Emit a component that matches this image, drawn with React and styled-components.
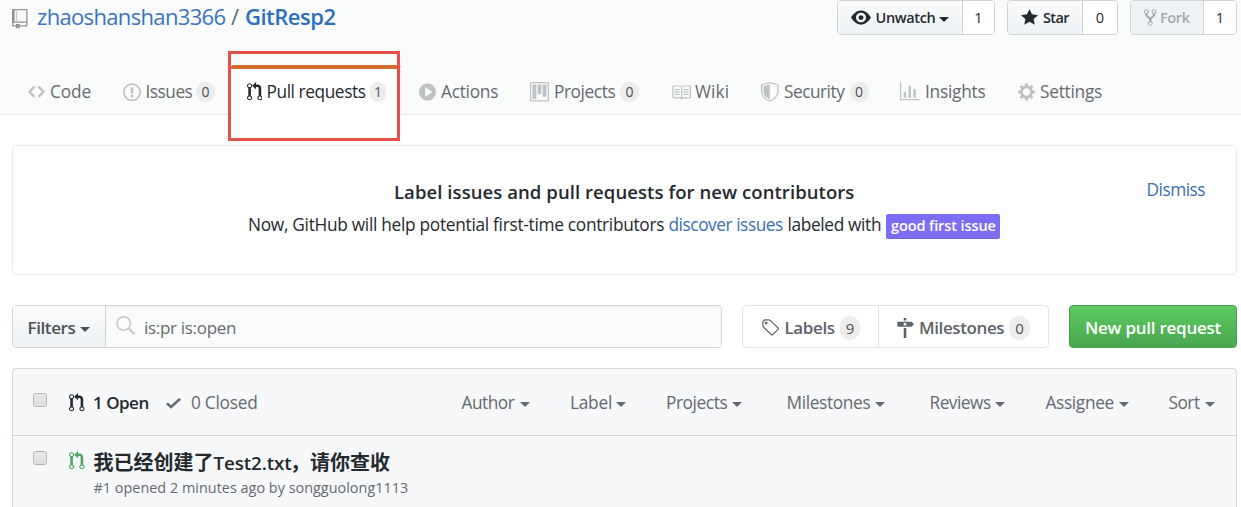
import React from 'react';
import styled, { createGlobalStyle, css } from 'styled-components';

const GlobalStyle = createGlobalStyle`
  *, *::before, *::after { box-sizing: border-box; }
  body {
    margin: 0;
    overflow: hidden;
    background: #fff;
    color: #24292e;
    font-family: "Open Sans", "Noto Sans CJK SC", sans-serif;
  }
`;

/* ---------- icons ---------- */

const PATHS = {
  code: [14, 16, 'M9.5 3L8 4.5 11.5 8 8 11.5 9.5 13 14 8 9.5 3zm-5 0L0 8l4.5 5L6 11.5 2.5 8 6 4.5 4.5 3z'],
  issue: [14, 16, 'M7 2.3c3.14 0 5.7 2.56 5.7 5.7s-2.56 5.7-5.7 5.7A5.71 5.71 0 0 1 1.3 8c0-3.14 2.56-5.7 5.7-5.7zM7 1C3.14 1 0 4.14 0 8s3.14 7 7 7 7-3.14 7-7-3.14-7-7-7zm1 3H6v5h2V4zm0 6H6v2h2v-2z'],
  pull: [12, 16, 'M11 11.28V5c-.03-.78-.34-1.47-.94-2.06C9.46 2.35 8.78 2.03 8 2H7V0L4 3l3 3V4h1c.27.02.48.11.69.31.21.2.3.42.31.69v6.28A1.993 1.993 0 0 0 10 15a1.993 1.993 0 0 0 1-3.72zm-1 2.92c-.66 0-1.2-.55-1.2-1.2 0-.65.55-1.2 1.2-1.2.65 0 1.2.55 1.2 1.2 0 .65-.55 1.2-1.2 1.2zM4 3c0-1.11-.89-2-2-2a1.993 1.993 0 0 0-1 3.72v6.56A1.993 1.993 0 0 0 2 15a1.993 1.993 0 0 0 1-3.72V4.72c.59-.34 1-.98 1-1.72zm-.8 10c0 .66-.55 1.2-1.2 1.2-.65 0-1.2-.55-1.2-1.2 0-.65.55-1.2 1.2-1.2.65 0 1.2.55 1.2 1.2zM2 4.2C1.34 4.2.8 3.65.8 3c0-.65.55-1.2 1.2-1.2.65 0 1.2.55 1.2 1.2 0 .65-.55 1.2-1.2 1.2z'],
  play: [14, 16, 'M14 8A7 7 0 1 1 0 8a7 7 0 0 1 14 0zm-8.223 3.482l4.599-3.066a.5.5 0 0 0 0-.832L5.777 4.518A.5.5 0 0 0 5 4.934v6.132a.5.5 0 0 0 .777.416z'],
  project: [15, 16, 'M10 12h3V2h-3v10zm-4-2h3V2H6v8zm-4 4h3V2H2v12zm-1 1h13V1H1v14zM14 0H1a1 1 0 0 0-1 1v14a1 1 0 0 0 1 1h13a1 1 0 0 0 1-1V1a1 1 0 0 0-1-1z'],
  book: [16, 16, 'M3 5h4v1H3V5zm0 3h4V7H3v1zm0 2h4V9H3v1zm11-5h-4v1h4V5zm0 2h-4v1h4V7zm0 2h-4v1h4V9zm2-6v9c0 .55-.45 1-1 1H9.5l-1 1-1-1H2c-.55 0-1-.45-1-1V3c0-.55.45-1 1-1h5.5l1 1 1-1H15c.55 0 1 .45 1 1zm-8 .5L7.5 3H2v9h6V3.5zm7-.5H9.5l-.5.5V12h6V3z'],
  shield: [14, 16, 'M0 2l7-2 7 2v6.02C14 12.69 8.69 16 7 16c-1.69 0-7-3.31-7-7.98V2zm1 .75L7 1l6 1.75v5.268C13 12.104 8.449 15 7 15c-1.449 0-6-2.896-6-6.982V2.75zm1 .75L7 2v12c-1.207 0-5-2.482-5-5.985V3.5z'],
  graph: [16, 16, 'M16 14v1H0V0h1v14h15zM5 13H3V8h2v5zm4 0H7V3h2v10zm4 0h-2V6h2v7z'],
  gear: [14, 16, 'M14 8.77v-1.6l-1.94-.64-.45-1.09.88-1.84-1.13-1.13-1.81.91-1.09-.45-.69-1.92h-1.6l-.63 1.94-1.11.45-1.84-.88-1.13 1.13.91 1.81-.45 1.09L0 7.23v1.59l1.94.64.45 1.09-.88 1.84 1.13 1.13 1.81-.91 1.09.45.69 1.92h1.59l.63-1.94 1.11-.45 1.84.88 1.13-1.13-.92-1.81.47-1.09L14 8.75v.02zM7 11c-1.66 0-3-1.34-3-3s1.34-3 3-3 3 1.34 3 3-1.34 3-3 3z'],
  repo: [12, 16, 'M4 9H3V8h1v1zm0-3H3v1h1V6zm0-2H3v1h1V4zm0-2H3v1h1V2zm8-1v12c0 .55-.45 1-1 1H6v2l-1.5-1.5L3 16v-2H1c-.55 0-1-.45-1-1V1c0-.55.45-1 1-1h10c.55 0 1 .45 1 1zm-1 10H1v2h2v-1h3v1h5v-2zm0-10H2v9h9V1z'],
  eye: [16, 16, 'M8.06 2C3 2 0 8 0 8s3 6 8.06 6C13 14 16 8 16 8s-3-6-7.94-6zM8 12c-2.2 0-4-1.78-4-4 0-2.2 1.8-4 4-4 2.22 0 4 1.8 4 4 0 2.22-1.78 4-4 4zm2-4c0 1.11-.89 2-2 2-1.11 0-2-.89-2-2 0-1.11.89-2 2-2 1.11 0 2 .89 2 2z'],
  star: [14, 16, 'M14 6l-4.9-.64L7 1 4.9 5.36 0 6l3.6 3.26L2.67 14 7 11.67 11.33 14l-.93-4.74L14 6z'],
  fork: [10, 16, 'M8 1a1.993 1.993 0 0 0-1 3.72V6L5 8 3 6V4.72A1.993 1.993 0 0 0 2 1a1.993 1.993 0 0 0-1 3.72V6.5l3 3v1.78A1.993 1.993 0 0 0 5 15a1.993 1.993 0 0 0 1-3.72V9.5l3-3V4.72A1.993 1.993 0 0 0 8 1zM2 4.2C1.34 4.2.8 3.65.8 3c0-.65.55-1.2 1.2-1.2.65 0 1.2.55 1.2 1.2 0 .65-.55 1.2-1.2 1.2zm3 10c-.66 0-1.2-.55-1.2-1.2 0-.65.55-1.2 1.2-1.2.65 0 1.2.55 1.2 1.2 0 .65-.55 1.2-1.2 1.2zm3-10c-.66 0-1.2-.55-1.2-1.2 0-.65.55-1.2 1.2-1.2.65 0 1.2.55 1.2 1.2 0 .65-.55 1.2-1.2 1.2z'],
  search: [16, 16, 'M15.7 13.3l-3.81-3.83A5.93 5.93 0 0 0 13 6c0-3.31-2.69-6-6-6S1 2.69 1 6s2.69 6 6 6c1.3 0 2.48-.41 3.47-1.11l3.83 3.81c.19.2.45.3.7.3.25 0 .52-.09.7-.3a.996.996 0 0 0 0-1.41v.01zM7 10.7c-2.59 0-4.7-2.11-4.7-4.7 0-2.59 2.11-4.7 4.7-4.7 2.59 0 4.7 2.11 4.7 4.7 0 2.59-2.11 4.7-4.7 4.7z'],
  tag: [14, 16, 'M7.73 1.73C7.26 1.26 6.62 1 5.96 1H3.5C2.13 1 1 2.13 1 3.5v2.47c0 .66.27 1.3.73 1.77l6.06 6.06c.39.39 1.02.39 1.41 0l4.59-4.59a.996.996 0 0 0 0-1.41L7.73 1.73zM2.38 7.09c-.31-.3-.47-.7-.47-1.13V3.5c0-.88.72-1.59 1.59-1.59h2.47c.42 0 .83.16 1.13.47l6.14 6.13-4.73 4.73-6.13-6.15zM3.01 3h2v2H3V3h.01z'],
  milestone: [14, 16, 'M8 2H6V0h2v2zm4 5H2c-.55 0-1-.45-1-1V4c0-.55.45-1 1-1h10l2 2-2 2zM8 4H6v2h2V4zM6 16h2V8H6v8z'],
  check: [12, 16, 'M12 5l-8 8-4-4 1.5-1.5L4 10l6.5-6.5L12 5z'],
};

const IconSvg = styled.svg`
  display: block;
  flex: none;
  fill: currentColor;
  color: ${p => p.$color || 'inherit'};
  margin-top: ${p => p.$drop || 0}px;
`;

function Icon({ name, w, h, color, drop }) {
  const [vw, vh, d] = PATHS[name];
  return (
    <IconSvg width={w} height={h} viewBox={`0 0 ${vw} ${vh}`} preserveAspectRatio="none" $color={color} $drop={drop}>
      <path fillRule="evenodd" d={d} />
    </IconSvg>
  );
}

/* ---------- shared parts ---------- */

const Text = styled.span`
  flex: none;
  white-space: pre;
  font-size: ${p => p.$size || 17.3}px;
  font-weight: ${p => (p.$bold ? 600 : 400)};
  letter-spacing: ${p => p.$track || 0}px;
  ${p => p.$w && css`width: ${p.$w}px;`}
`;

const IconSlot = styled.span`
  display: flex;
  align-items: center;
  flex: none;
  width: ${p => p.$w}px;
`;

const Caret = styled.span`
  flex: none;
  margin-top: 3px;
  border: 5px solid transparent;
  border-top-color: currentColor;
  border-bottom-width: 0;
`;

const Counter = styled.span`
  display: flex;
  align-items: center;
  justify-content: center;
  flex: none;
  width: ${p => p.$w || 19}px;
  height: ${p => p.$h || 20}px;
  border-radius: 10px;
  background: #ededee;
  color: #4b5056;
  font-size: ${p => p.$size || 14}px;
  font-weight: 500;
  line-height: 20px;
`;

/* ---------- repository header ---------- */

const Header = styled.header`
  display: flex;
  flex-direction: column;
  height: 115px;
  background: #fafbfb;
  border-bottom: 1px solid #e4e6e8;
`;

const TitleBar = styled.div`
  display: flex;
  align-items: flex-start;
  justify-content: space-between;
  flex: none;
  height: 65px;
  padding: 0 4px 0 12px;
`;

const RepoTitle = styled.h1`
  display: flex;
  align-items: center;
  height: 31px;
  margin: 0;
  line-height: 32px;
  color: #3a74c2;
`;

const Slash = styled(Text)`
  color: #666b70;
`;

const RepoName = styled(Text)`
  color: #2b6fbd;
`;

const Actions = styled.div`
  display: flex;
  gap: 12px;
`;

const ButtonGroup = styled.div`
  display: flex;
  height: 35px;
  border: 1px solid #cfd2d5;
  border-radius: 4px;
  overflow: hidden;
  line-height: 33px;
`;

const ActionButton = styled.div`
  display: flex;
  align-items: center;
  width: ${p => p.$w}px;
  padding-left: 13px;
  border-right: 1px solid #cfd2d5;
  background: ${p => (p.$disabled ? '#eff3f6' : 'linear-gradient(#fafbfc, #eff3f6)')};
  color: ${p => (p.$disabled ? '#a5aaaf' : '#24292e')};
`;

const SocialCount = styled.div`
  width: ${p => p.$w}px;
  background: #fff;
  text-align: center;
  font-size: 14.5px;
  font-weight: 500;
`;

const Tabs = styled.nav`
  display: flex;
  flex: none;
  height: 49px;
  padding-left: 28px;
  line-height: 24px;
`;

const Tab = styled.div`
  display: flex;
  align-items: center;
  flex: none;
  width: ${p => p.$w}px;
  height: 50px;
  padding-top: 4px;
  color: #666a70;
  ${p => p.$selected && css`
    margin: 0 18px 0 0;
    padding: 0 0 0 15.5px;
    background: #fff;
    border-right: 1px solid #eceeef;
    border-top: 4px solid #d26b2c;
    border-radius: 2px 2px 0 0;
    color: #24292e;
  `}
`;

const Highlight = styled.div`
  position: absolute;
  left: 228px;
  top: 51px;
  width: 172px;
  height: 90px;
  border: 3px solid #e5504c;
`;

/* ---------- notice ---------- */

const Main = styled.main`
  display: flex;
  flex-direction: column;
  padding: 30px 4px 0 12px;
`;

const Notice = styled.section`
  display: flex;
  justify-content: space-between;
  height: 130px;
  padding: 32px 31px 0 235px;
  border: 1px solid #e9eaeb;
  border-radius: 4px;
`;

const NoticeBody = styled.div`
  display: flex;
  flex-direction: column;
`;

const NoticeTitle = styled.div`
  height: 31px;
  padding-left: 146px;
  line-height: 28px;
`;

const NoticeText = styled.div`
  display: flex;
  align-items: center;
  height: 32px;
  line-height: 30px;
`;

const Link = styled(Text)`
  color: #3a6fae;
`;

const Dismiss = styled(Link)`
  line-height: 24px;
`;

const IssueLabel = styled.span`
  display: flex;
  align-items: center;
  width: 114px;
  height: 25px;
  margin-top: 2px;
  padding-left: 5px;
  border-radius: 2px;
  background: #7d6df5;
  box-shadow: inset 0 -1px 0 rgba(27, 31, 35, 0.12);
  color: #fff;
  line-height: 24px;
`;

/* ---------- toolbar ---------- */

const Toolbar = styled.div`
  display: flex;
  height: 43px;
  margin-top: 30px;
  gap: 20px;
  line-height: 41px;
`;

const SearchGroup = styled.div`
  display: flex;
  width: 710px;
  border: 1px solid #d3d6d9;
  border-radius: 4px;
  overflow: hidden;
`;

const FilterButton = styled.div`
  display: flex;
  align-items: center;
  width: 93px;
  padding: 2px 0 0 14.5px;
  border-right: 1px solid #d3d6d9;
  background: linear-gradient(#fafbfc, #eff3f6);
  color: #4b5157;
`;

const SearchInput = styled.div`
  display: flex;
  align-items: center;
  flex: 1;
  padding: 2px 0 0 9px;
  background: #fafbfb;
  box-shadow: inset 0 1px 2px rgba(27, 31, 35, 0.07);
  color: #666a70;
`;

const SubNav = styled.div`
  display: flex;
  width: 307px;
  border: 1px solid #e3e5e7;
  border-radius: 4px;
`;

const SubNavItem = styled.div`
  display: flex;
  align-items: center;
  width: ${p => p.$w}px;
  padding: 2px 0 0 ${p => p.$inset}px;
  color: #5d6369;
  & + & { border-left: 1px solid #e3e5e7; }
`;

const PrimaryButton = styled.div`
  width: 168px;
  padding: 1px 0 0 15px;
  border: 1px solid #47a04f;
  border-radius: 4px;
  background: linear-gradient(#5fcb62, #47a64d);
  color: #fff;
`;

/* ---------- pull request list ---------- */

const List = styled.section`
  height: 160px;
  margin-top: 20px;
  border: 1px solid #d6d9dc;
  border-radius: 4px;
  background: #f6f8fa;
`;

const ListHeader = styled.div`
  display: flex;
  align-items: center;
  height: 67px;
  padding: 2px 0 0 20px;
  border-bottom: 1px solid #d3d6da;
  line-height: 28px;
  color: #666a70;
`;

const Checkbox = styled.span`
  flex: none;
  width: 14px;
  height: 14px;
  margin: ${p => p.$shift}px 22px 0 0;
  border: 1px solid #b3b5b7;
  border-radius: 3px;
  background: linear-gradient(#e9e9ea, #dcdddf);
`;

const OpenState = styled(Text)`
  color: #24292e;
`;

const FilterMenu = styled.div`
  display: flex;
  align-items: center;
  flex: none;
  width: ${p => p.$w}px;
`;

const Row = styled.div`
  display: flex;
  padding: 11px 0 0 20px;
`;

const RowBody = styled.div`
  display: flex;
  flex-direction: column;
`;

const RowTitle = styled.div`
  display: flex;
  align-items: baseline;
  height: 30px;
  line-height: 30px;
`;

const RowTitleCjk = styled(Text)`
  font-family: "Noto Sans CJK SC", sans-serif;
  font-size: 20px;
  font-weight: 700;
  line-height: 30px;
`;

const RowMeta = styled.div`
  height: 20px;
  line-height: 20px;
  color: #666a70;
`;

const TABS = [
  { icon: 'code', iw: 17, ih: 19.5, slot: 22, label: 'Code', track: -0.1, width: 95 },
  { icon: 'issue', iw: 18, ih: 20.5, slot: 22.5, label: 'Issues', track: -0.5, tw: 50.5, count: 0, width: 108 },
  { icon: 'pull', iw: 15.5, ih: 19.5, slot: 20, label: 'Pull requests', track: -0.42, tw: 103.5, count: 1, cw: 16, width: 170, selected: true },
  { icon: 'play', iw: 17, ih: 20, slot: 22, label: 'Actions', track: -0.25, width: 111 },
  { icon: 'project', iw: 19, ih: 19.5, slot: 24, label: 'Projects', track: -0.42, tw: 66, count: 0, width: 141 },
  { icon: 'book', iw: 20, ih: 19, slot: 24, label: 'Wiki', track: 0.1, width: 90 },
  { icon: 'shield', iw: 17.5, ih: 19.5, slot: 23, label: 'Security', track: -0.5, tw: 65.5, count: 0, width: 139 },
  { icon: 'graph', iw: 19.5, ih: 19.5, slot: 25, label: 'Insights', track: -0.25, width: 118 },
  { icon: 'gear', iw: 17, ih: 20, slot: 22, label: 'Settings', track: -0.25, width: 100 },
];

const MENUS = [
  { label: 'Author', track: -0.5, tw: 58, width: 108.5 },
  { label: 'Label', track: -0.25, tw: 46, width: 96 },
  { label: 'Projects', track: -0.42, tw: 66, width: 120.5 },
  { label: 'Milestones', track: -0.35, tw: 88, width: 143 },
  { label: 'Reviews', track: -0.5, tw: 65, width: 116 },
  { label: 'Assignee', track: -0.35, tw: 73, width: 123 },
  { label: 'Sort', track: -0.5, tw: 36, width: 50 },
];

export default function App() {
  return (
    <>
      <GlobalStyle />
      <Header>
        <TitleBar>
          <RepoTitle>
            <IconSlot $w={25}><Icon name="repo" w={15.5} h={20} drop={6} color="#8f9498" /></IconSlot>
            <Text $size={22} $track={-0.66} $w={194}>zhaoshanshan3366</Text>
            <Slash $size={22} $w={14}>/</Slash>
            <RepoName $size={22} $track={-0.5} $bold>GitResp2</RepoName>
          </RepoTitle>
          <Actions>
            <ButtonGroup>
              <ActionButton $w={125}>
                <IconSlot $w={24.5}><Icon name="eye" w={20} h={19} /></IconSlot>
                <Text $size={14.5} $track={-0.35} $bold $w={63.5}>Unwatch</Text>
                <Caret />
              </ActionButton>
              <SocialCount $w={31}>1</SocialCount>
            </ButtonGroup>
            <ButtonGroup>
              <ActionButton $w={75}>
                <IconSlot $w={22}><Icon name="star" w={17} h={19} /></IconSlot>
                <Text $size={14.5} $track={-0.6} $bold>Star</Text>
              </ActionButton>
              <SocialCount $w={34}>0</SocialCount>
            </ButtonGroup>
            <ButtonGroup>
              <ActionButton $w={73} $disabled>
                <IconSlot $w={16}><Icon name="fork" w={12.5} h={19} /></IconSlot>
                <Text $size={14.5} $track={-0.4} $bold>Fork</Text>
              </ActionButton>
              <SocialCount $w={32}>1</SocialCount>
            </ButtonGroup>
          </Actions>
        </TitleBar>
        <Tabs>
          {TABS.map(t => (
            <Tab key={t.label} $w={t.width} $selected={t.selected}>
              <IconSlot $w={t.slot}>
                <Icon name={t.icon} w={t.iw} h={t.ih} color={t.selected ? undefined : '#bfc2c4'} />
              </IconSlot>
              <Text $track={t.track} $w={t.tw}>{t.label}</Text>
              {t.count !== undefined && <Counter $w={t.cw}>{t.count}</Counter>}
            </Tab>
          ))}
        </Tabs>
      </Header>
      <Highlight />

      <Main>
        <Notice>
          <NoticeBody>
            <NoticeTitle>
              <Text $size={18.5} $track={0.07} $bold>Label issues and pull requests for new contributors</Text>
            </NoticeTitle>
            <NoticeText>
              <Text $track={-0.29} $w={420.5}>Now, GitHub will help potential first-time contributors</Text>
              <Link $track={-0.45} $w={119}>discover issues</Link>
              <Text $track={-0.35} $w={98.5}>labeled with</Text>
              <IssueLabel><Text $size={14.5} $track={-0.1} $bold>good first issue</Text></IssueLabel>
            </NoticeText>
          </NoticeBody>
          <Dismiss $track={-0.5}>Dismiss</Dismiss>
        </Notice>

        <Toolbar>
          <SearchGroup>
            <FilterButton>
              <Text $size={17} $track={-0.4} $bold $w={52.5}>Filters</Text>
              <Caret />
            </FilterButton>
            <SearchInput>
              <IconSlot $w={29}><Icon name="search" w={20} h={20} color="#c9cbcd" drop={-4} /></IconSlot>
              <Text $size={17} $track={-0.3}>is:pr is:open</Text>
            </SearchInput>
          </SearchGroup>
          <SubNav>
            <SubNavItem $w={135} $inset={18}>
              <IconSlot $w={23.5}><Icon name="tag" w={18} h={20} /></IconSlot>
              <Text $size={17} $track={-0.4} $bold $w={55.5}>Labels</Text>
              <Counter $w={20} $h={24} $size={15}>9</Counter>
            </SubNavItem>
            <SubNavItem $w={170} $inset={17}>
              <IconSlot $w={23}><Icon name="milestone" w={18} h={20} /></IconSlot>
              <Text $size={17} $track={-0.4} $bold $w={90}>Milestones</Text>
              <Counter $w={21} $h={24} $size={15}>0</Counter>
            </SubNavItem>
          </SubNav>
          <PrimaryButton><Text $size={17} $track={-0.25} $bold>New pull request</Text></PrimaryButton>
        </Toolbar>

        <List>
          <ListHeader>
            <Checkbox $shift={-6} />
            <IconSlot $w={24}><Icon name="pull" w={15.5} h={19.5} color="#24292e" /></IconSlot>
            <OpenState $size={17} $track={-0.5} $bold $w={73}>1 Open</OpenState>
            <IconSlot $w={25}><Icon name="check" w={15} h={18} /></IconSlot>
            <Text $track={-0.25} $w={270.5}>0 Closed</Text>
            {MENUS.map(m => (
              <FilterMenu key={m.label} $w={m.width}>
                <Text $track={m.track} $w={m.tw}>{m.label}</Text>
                <Caret />
              </FilterMenu>
            ))}
          </ListHeader>
          <Row>
            <Checkbox $shift={4} />
            <IconSlot $w={24.5}><Icon name="pull" w={15.5} h={19.5} color="#4aa660" drop={-22} /></IconSlot>
            <RowBody>
              <RowTitle>
                <RowTitleCjk>我已经创建了</RowTitleCjk>
                <Text $size={18.8} $track={-0.1} $bold $w={76.5}>Test2.txt</Text>
                <RowTitleCjk>，请你查收</RowTitleCjk>
              </RowTitle>
              <RowMeta><Text $size={14.4} $track={0.02}>#1 opened 2 minutes ago by songguolong1113</Text></RowMeta>
            </RowBody>
          </Row>
        </List>
      </Main>
    </>
  );
}
